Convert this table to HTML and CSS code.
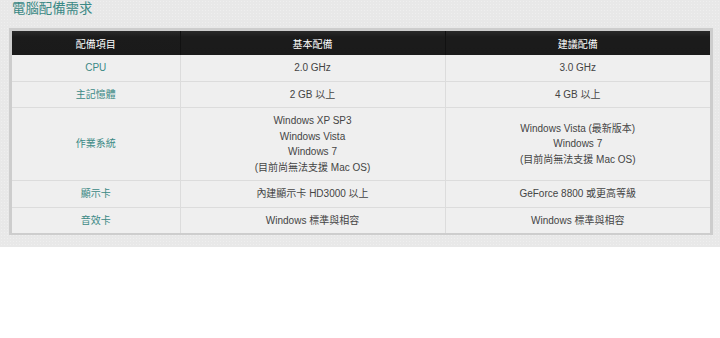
FILE: index.html
```html
<!DOCTYPE html>
<html lang="zh-Hant">
<head>
<meta charset="utf-8">
<title>電腦配備需求</title>
<link rel="stylesheet" href="styles.css">
</head>
<body>
<div class="page">
  <h1 class="title">電腦配備需求</h1>
  <div class="spec-box">
    <table class="spec">
      <colgroup>
        <col class="c1"><col class="c2"><col class="c3">
      </colgroup>
      <thead>
        <tr><th>配備項目</th><th>基本配備</th><th>建議配備</th></tr>
      </thead>
      <tbody>
        <tr><td class="item">CPU</td><td>2.0 GHz</td><td>3.0 GHz</td></tr>
        <tr><td class="item">主記憶體</td><td>2 GB 以上</td><td>4 GB 以上</td></tr>
        <tr><td class="item">作業系統</td><td>Windows XP SP3<br>Windows Vista<br>Windows 7<br>(目前尚無法支援 Mac OS)</td><td>Windows Vista (最新版本)<br>Windows 7<br>(目前尚無法支援 Mac OS)</td></tr>
        <tr><td class="item">顯示卡</td><td>內建顯示卡 HD3000 以上</td><td>GeForce 8800 或更高等級</td></tr>
        <tr><td class="item">音效卡</td><td>Windows 標準與相容</td><td>Windows 標準與相容</td></tr>
      </tbody>
    </table>
  </div>
</div>
</body>
</html>
```

FILE: styles.css
```css
html, body {
  margin: 0;
  padding: 0;
  background: #ffffff;
}
.page {
  background-color: #e8e8e8;
  background-image: radial-gradient(rgba(255,255,255,0.3) 1px, transparent 1px);
  background-size: 3px 3px;
  padding: 0 0 12px 9px;
  font-family: "Liberation Sans", "Noto Sans CJK TC", sans-serif;
}
.title {
  margin: 0;
  padding-left: 3px;
  font-size: 13.4px;
  line-height: 18px;
  font-weight: normal;
  color: #3b8985;
}
.spec-box {
  margin-top: 10px;
  width: 698px;
  border: 3px solid #cdcdcd;
  border-bottom-width: 2px;
}
.spec {
  width: 698px;
  table-layout: fixed;
  border-collapse: collapse;
  font-size: 10px;
  color: #444;
}
.c1 { width: 168px; }
.c2 { width: 265px; }
.c3 { width: 265px; }
.spec th {
  height: 24px;
  padding: 0;
  background: linear-gradient(#2a2a2a, #1b1b1b 25%, #1a1a1a);
  color: #fff;
  font-weight: normal;
  font-size: 10px;
  text-align: center;
  vertical-align: middle;
  border-left: 1px solid #111;
}
.spec th:first-child { border-left: none; }
.spec td {
  background: #efefef;
  text-align: center;
  vertical-align: middle;
  padding: 5px 4px;
  line-height: 15.5px;
  border-top: 1px solid #dcdcdc;
  border-left: 1px solid #dcdcdc;
}
.spec tbody tr:first-child td { border-top: none; }
.spec td:first-child { border-left: none; }
.spec td.item { color: #3b8985; }
```
